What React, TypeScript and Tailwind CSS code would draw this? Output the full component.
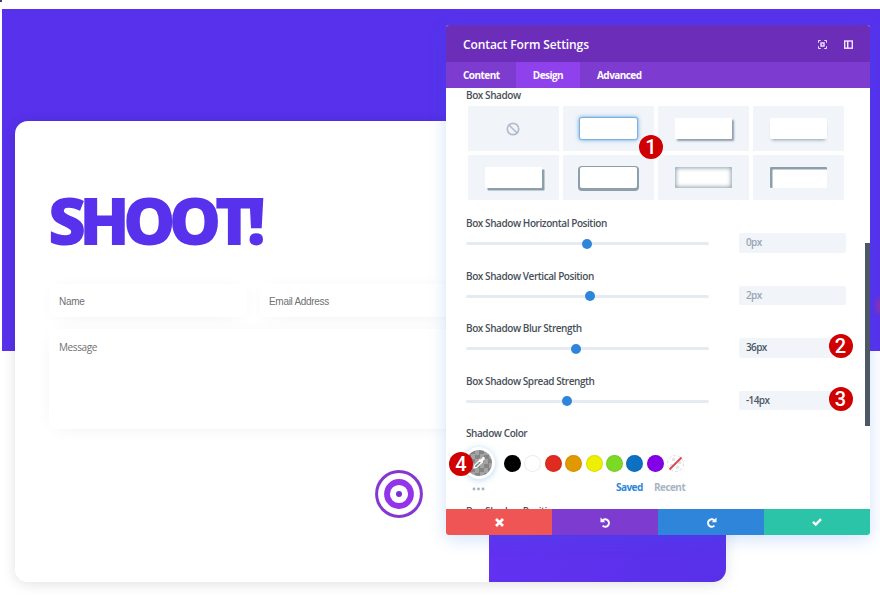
import { ReactNode } from "react";
import clsx from "clsx";

const labelClass =
  "text-[10px] leading-[14px] tracking-[-0.43px] font-semibold text-[#484f59]";

const presets = [
  "",
  "rounded-[2px] shadow-[0_0_4px_1px_#6aabe2,0_0_1px_1px_#86b6e0]",
  "rounded-[1px] shadow-[2px_2px_2px_0_#8e9fac]",
  "rounded-[2px] shadow-[0_3px_3px_-2px_#8e9fac]",
  "rounded-[1px] shadow-[2.5px_2.5px_0_0_#8e9fac]",
  "rounded-[2px] shadow-[0_1px_0_2px_#8e9fac]",
  "rounded-[1px] shadow-[inset_0_0_4px_1px_#8e9fac]",
  "rounded-[1px] shadow-[inset_2.5px_2.5px_0_0_#8e9fac]",
];

const sliders = [
  { label: "Box Shadow Horizontal Position", value: "0px", left: 121.3, isSet: false },
  { label: "Box Shadow Vertical Position", value: "2px", left: 124.3, isSet: false },
  { label: "Box Shadow Blur Strength", value: "36px", left: 109.7, isSet: true, badge: 2 },
  { label: "Box Shadow Spread Strength", value: "-14px", left: 100.8, isSet: true, badge: 3 },
];

const swatches = [
  "bg-black",
  "bg-white",
  "bg-[#e02b20]",
  "bg-[#e09900]",
  "bg-[#edf000]",
  "bg-[#7cda24]",
  "bg-[#0c71c3]",
  "bg-[#8300e9]",
];

interface BadgeProps {
  children: ReactNode;
  className?: string;
}

const Badge = ({ children, className }: BadgeProps) => {
  return (
    <span
      className={clsx(
        "absolute z-10 flex h-6 w-6 items-center justify-center rounded-full bg-[#d00000] font-[Roboto,sans-serif] text-[20px] leading-6 font-medium tracking-normal text-white",
        className
      )}
    >
      {children}
    </span>
  );
};

const Target = () => {
  return (
    <svg width="48" height="48" viewBox="0 0 48 48" fill="none">
      <circle cx="24" cy="24" r="22.4" stroke="#8338cf" strokeWidth="3" />
      <circle cx="24" cy="24" r="12" stroke="#9333ea" strokeWidth="5.8" />
      <circle cx="24" cy="24" r="3" fill="#7c2fd0" />
    </svg>
  );
};

const ContactCard = () => {
  return (
    <div className="relative -mt-[230px] ml-[15px] flex h-[461px] w-[711px] overflow-hidden rounded-[13px] bg-white">
      <div className="w-[474px] pl-[34px]">
        <h1 className="mt-[53px] -ml-[1px] text-[66px] leading-[90px] font-extrabold tracking-[-6.8px] text-[#5731eb]">
          SHOOT!
        </h1>
        <div className="mt-[20px] flex gap-[13px]">
          <div className="h-[33px] w-[198px] shrink-0 bg-white px-[10px] font-['Liberation_Sans',Arial,sans-serif] text-[10px] leading-[35px] tracking-[-0.3px] text-[#707070] shadow-[0_2px_18px_-7px_rgba(0,0,0,0.1)]">
            Name
          </div>
          <div className="h-[33px] w-[198px] shrink-0 bg-white px-[9px] font-['Liberation_Sans',Arial,sans-serif] text-[10px] leading-[35px] tracking-[-0.3px] text-[#707070] shadow-[0_2px_18px_-7px_rgba(0,0,0,0.1)]">
            Email Address
          </div>
        </div>
        <div className="mt-[12px] h-[100px] w-[409px] bg-white px-[10px] pt-[11px] text-[10px] leading-[14px] tracking-[-0.4px] text-[#707070] shadow-[0_2px_18px_-7px_rgba(0,0,0,0.1)]">
          Message
        </div>
        <div className="mt-[41px] ml-[325.5px]">
          <Target />
        </div>
      </div>
      <div className="flex-1 bg-linear-to-br from-[#6a33f4] to-[#5830ea]" />
    </div>
  );
};

const ModalHeader = () => {
  return (
    <>
      <div className="flex h-[37px] items-center justify-between bg-[#6c2eb9] px-[17px] pt-[2px] text-white">
        <span className="text-[12px] leading-[16px] font-semibold tracking-[-0.1px]">
          Contact Form Settings
        </span>
        <div className="flex items-center gap-[17px]">
          <svg width="9" height="9" viewBox="0 0 9 9" fill="none" stroke="#f3e6ff">
            <path d="M.5 2.7V.5h2.2M6.3.5h2.2v2.2M8.5 6.3v2.2H6.3M2.7 8.5H.5V6.3" />
            <rect x="3" y="3" width="3" height="3" strokeWidth="1.4" />
          </svg>
          <svg width="9" height="9" viewBox="0 0 9 9" fill="none" stroke="#f3e6ff">
            <rect x=".7" y="1" width="7.6" height="7.2" strokeWidth="1.4" />
            <path d="M3.7 1v7" strokeWidth="1.5" />
          </svg>
        </div>
      </div>
      <div className="flex h-[26px] bg-[#7e3bd0] text-[10px] leading-[26px] font-bold tracking-[-0.55px] text-white">
        <span className="w-[70px] pl-[17px]">Content</span>
        <span className="w-[64px] bg-[#8f42ec] text-center">Design</span>
        <span className="pl-[17px]">Advanced</span>
      </div>
    </>
  );
};

const PresetGrid = () => {
  return (
    <div className="relative mt-[4px] ml-[1.5px] grid w-[376.5px] grid-cols-4 gap-x-[3.8px] gap-y-[4px]">
      {presets.map((shadow, index) => {
        return (
          <div
            key={index}
            className="flex h-[45px] items-center justify-center bg-[#f1f4f9]"
          >
            {index === 0 ? (
              <svg width="14" height="14" viewBox="0 0 14 14" fill="none" stroke="#b4bdcb" strokeWidth="1.7">
                <circle cx="7" cy="7" r="5.7" />
                <path d="M3 3l8 8" />
              </svg>
            ) : (
              <div className={clsx("h-[21px] w-[57px] bg-white", shadow)} />
            )}
          </div>
        );
      })}
      <Badge className="top-[29px] left-[171.5px]">1</Badge>
    </div>
  );
};

const SliderRow = ({ label, value, left, isSet, badge }: (typeof sliders)[0]) => {
  return (
    <div className="h-[52.5px]">
      <div className={labelClass}>{label}</div>
      <div className="mt-[3px] flex items-center">
        <div className="relative mt-[2px] h-[3px] w-[243px] rounded-full bg-[#e6ebf3]">
          <span
            className="absolute -top-[3.5px] h-[10px] w-[10px] -translate-x-1/2 rounded-full bg-[#2e85d9]"
            style={{ left }}
          />
        </div>
        <div
          className={clsx(
            "relative ml-[30px] h-[19.5px] w-[106.5px] rounded-[2px] bg-[#f1f4f9] pl-[7px] text-[10px] leading-[19px] font-semibold tracking-[-0.6px]",
            isSet ? "text-[#4c5866]" : "text-[#98a5b5]"
          )}
        >
          {value}
          {badge && <Badge className="-top-[4px] right-[-7px]">{badge}</Badge>}
        </div>
      </div>
    </div>
  );
};

const ColorPicker = () => {
  return (
    <div className="relative">
      <div className={labelClass}>Shadow Color</div>
      <div className="mt-[7px] flex items-center">
        <div className="-ml-[3px] flex h-[32px] w-[32px] shrink-0 items-center justify-center rounded-full bg-white shadow-[0_1px_6px_rgba(43,135,218,0.35)]">
          <div className="flex h-[26px] w-[26px] items-center justify-center rounded-full bg-[conic-gradient(#858585_25%,#a3a3a3_0_50%,#858585_0_75%,#a3a3a3_0)] bg-[length:9px_9px]">
            <svg width="14" height="14" viewBox="0 0 14 14">
              <path d="M2 12l.7-2.6 5-5 2 2-5 5z" fill="none" stroke="#fff" strokeWidth="1.2" />
              <path d="M7 3.4l.9-.8.9.8 1.6-1.9c1.4-1.3 3.4.6 2.1 2l-1.8 1.7.8.9-.9.9z" fill="#fff" />
            </svg>
          </div>
        </div>
        <div className="ml-[9px] flex gap-[3.4px]">
          {swatches.map((color) => {
            return (
              <span
                key={color}
                className={clsx(
                  "h-[17px] w-[17px] rounded-full shadow-[inset_0_0_0_1px_rgba(0,0,0,0.08)]",
                  color
                )}
              />
            );
          })}
          <svg width="17" height="17" viewBox="0 0 17 17">
            <circle cx="8.5" cy="8.5" r="8" fill="#fff" stroke="#ddd" strokeDasharray="3 2" />
            <path d="M5 3h3v3H5zM11 6h3v3h-3zM3 9h3v3H3zM9 11h3v3H9z" fill="#e6e6e6" />
            <path d="M2.5 14.5l12-12" stroke="#e0434e" strokeWidth="1.8" />
          </svg>
        </div>
      </div>
      <div className="mt-[1px] flex items-center text-[10px] leading-[14px] font-bold tracking-[-0.55px]">
        <svg width="13" height="4" viewBox="0 0 13 4" fill="#a2b0c1" className="mt-[3px] ml-[6px]">
          <circle cx="2" cy="2" r="1.4" />
          <circle cx="6.5" cy="2" r="1.4" />
          <circle cx="11" cy="2" r="1.4" />
        </svg>
        <span className="ml-[131px] w-[27px] text-[#2b87da]">Saved</span>
        <span className="ml-[11px] text-[#a9b5c4]">Recent</span>
      </div>
      <Badge className="top-[26px] -left-[17px]">4</Badge>
    </div>
  );
};

const ModalFooter = () => {
  return (
    <div className="grid h-[26px] grid-cols-4">
      <div className="flex items-center justify-center bg-[#ef5555]">
        <svg width="9" height="9" viewBox="0 0 9 9" stroke="#fff" strokeWidth="2.8">
          <path d="M1 1l7 7M8 1l-7 7" />
        </svg>
      </div>
      <div className="flex items-center justify-center bg-[#7e3bd0]">
        <svg width="11" height="11" viewBox="0 0 11 11" fill="none">
          <path d="M2.8 3.2A3.7 3.7 0 1 1 2.6 8.6" stroke="#fff" strokeWidth="2" />
          <path d="M.5.6v4.7h4.7z" fill="#fff" />
        </svg>
      </div>
      <div className="flex items-center justify-center bg-[#2e85d9]">
        <svg width="11" height="11" viewBox="0 0 11 11" fill="none">
          <path d="M8.2 3.2A3.7 3.7 0 1 0 8.4 8.6" stroke="#fff" strokeWidth="2" />
          <path d="M10.5.6v4.7H5.8z" fill="#fff" />
        </svg>
      </div>
      <div className="flex items-center justify-center bg-[#2bc4a9]">
        <svg width="10" height="8" viewBox="0 0 10 8" fill="none" stroke="#fff" strokeWidth="2.4">
          <path d="M1 3.8l2.8 2.7L9 1.2" />
        </svg>
      </div>
    </div>
  );
};

const SettingsModal = () => {
  return (
    <div className="absolute top-[25px] left-[446px] w-[424px] rounded-[3px] shadow-[0_4px_18px_rgba(30,110,230,0.2)]">
      <div className="overflow-hidden rounded-[3px] bg-white">
        <ModalHeader />
        <div className="relative h-[421px] overflow-hidden pl-[20px]">
          <div className={labelClass}>Box Shadow</div>
          <PresetGrid />
          <div className="mt-[16px]">
            {sliders.map((slider) => {
              return <SliderRow key={slider.label} {...slider} />;
            })}
          </div>
          <ColorPicker />
          <div className={clsx(labelClass, "mt-[10px]")}>Box Shadow Position</div>
          <div className="absolute top-[155px] right-0 h-[183px] w-[5px] bg-[#4c5866]" />
        </div>
        <ModalFooter />
      </div>
    </div>
  );
};

const App = () => {
  return (
    <div className="relative h-[604px] w-[880px] overflow-hidden bg-white pt-[9px] font-['Open_Sans',sans-serif]">
      <span className="absolute top-0 left-0 h-[2px] w-[2px] bg-[#41416b]" />
      <div className="ml-[2px] h-[342px] bg-[#5731eb]" />
      <div className="absolute top-[298px] -right-[5px] h-[16px] w-[9px] rounded-full bg-[#8a30b0] blur-[2px]" />
      <div className="absolute top-[121px] left-[15px] h-[461px] w-[711px] rounded-[13px] shadow-[0_2px_14px_rgba(0,0,0,0.12)]" />
      <ContactCard />
      <SettingsModal />
    </div>
  );
};

export default App;
